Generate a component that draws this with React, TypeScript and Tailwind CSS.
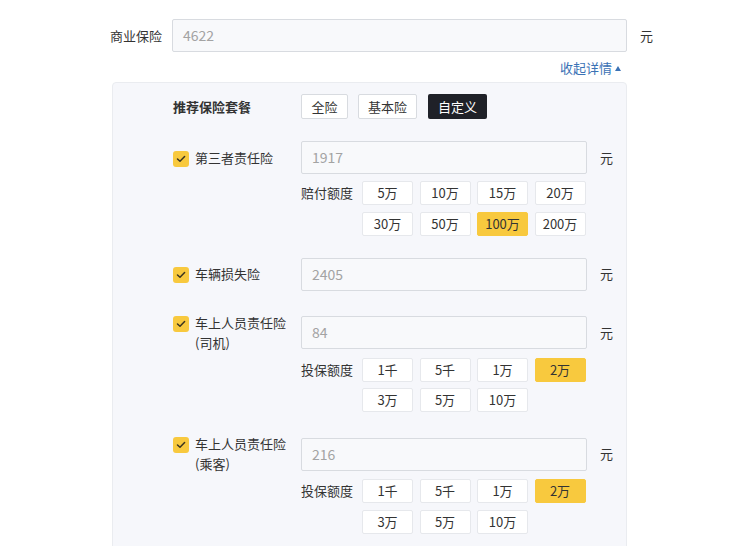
import React from 'react';

interface Coverage {
  label: string[];
  value: string;
  optionLabel?: string;
  options?: string[];
  selected?: string;
}

const coverages: Coverage[] = [
  {
    label: ['第三者责任险'],
    value: '1917',
    optionLabel: '赔付额度',
    options: ['5万', '10万', '15万', '20万', '30万', '50万', '100万', '200万'],
    selected: '100万',
  },
  { label: ['车辆损失险'], value: '2405' },
  {
    label: ['车上人员责任险', '(司机)'],
    value: '84',
    optionLabel: '投保额度',
    options: ['1千', '5千', '1万', '2万', '3万', '5万', '10万'],
    selected: '2万',
  },
  {
    label: ['车上人员责任险', '(乘客)'],
    value: '216',
    optionLabel: '投保额度',
    options: ['1千', '5千', '1万', '2万', '3万', '5万', '10万'],
    selected: '2万',
  },
];

function Checkbox() {
  return (
    <span className="mt-[3px] flex h-4 w-4 shrink-0 items-center justify-center rounded-[3px] bg-[#f8c93e]">
      <svg width="10" height="8" viewBox="0 0 10 8" fill="none">
        <path d="M1.5 4l2.5 2.3L8.6 1.6" stroke="#3a3420" strokeWidth="1.5" strokeLinecap="round" strokeLinejoin="round" />
      </svg>
    </span>
  );
}

function CoverageRow({ item }: { item: Coverage }) {
  return (
    <div>
      <div className="flex items-center">
        <div className="flex w-[128px] items-start gap-[6px]">
          <Checkbox />
          <div className="leading-5">
            {item.label.map((l) => (
              <div key={l}>{l}</div>
            ))}
          </div>
        </div>
        <div className="flex h-[33px] w-[286px] items-center rounded-[2px] border border-[#d8dbe0] bg-[#f8f9fb] px-[10px] text-[14px] text-[#a3a3a3]">
          {item.value}
        </div>
        <span className="ml-[13px]">元</span>
      </div>
      {item.options && (
        <div className={item.label.length > 1 ? 'mt-[5px] flex pl-[128px]' : 'mt-[7px] flex pl-[128px]'}>
          <span className="w-[61px] leading-6">{item.optionLabel}</span>
          <div className="grid grid-cols-[repeat(4,51px)] gap-x-[6.5px] gap-y-[6.5px]">
            {item.options.map((o) => (
              <div
                key={o}
                className={
                  o === item.selected
                    ? 'flex h-6 items-center justify-center rounded-[2px] border border-[#f8c93e] bg-[#f8c93e]'
                    : 'flex h-6 items-center justify-center rounded-[2px] border border-[#e6e8ec] bg-white'
                }
              >
                {o}
              </div>
            ))}
          </div>
        </div>
      )}
    </div>
  );
}

export default function App() {
  return (
    <div className="min-h-[546px] bg-white pl-[110px] pt-[19px] font-['Noto_Sans_CJK_SC',sans-serif] text-[13px] text-[#333]">
      {/* 商业保险 */}
      <div className="flex h-[33px] items-center">
        <span className="w-[62px]">商业保险</span>
        <div className="flex h-[33px] w-[455px] items-center rounded-[2px] border border-[#d8dbe0] bg-[#f8f9fb] px-[10px] text-[14px] text-[#a3a3a3]">
          4622
        </div>
        <span className="ml-[13px]">元</span>
      </div>

      <div className="mt-[6px] flex h-5 w-[517px] items-center justify-end gap-[3px] pr-[6px] text-[#3b72b5]">
        <span>收起详情</span>
        <svg width="6" height="5" viewBox="0 0 6 5">
          <polygon points="3,0 6,5 0,5" fill="#3b72b5" />
        </svg>
      </div>

      {/* 详情 */}
      <div className="ml-[2px] mt-[4px] h-[480px] w-[515px] rounded-[4px] border border-[#eaecf0] bg-[#f6f7fb] pl-[60px] pt-[11px]">
        <div className="flex h-[25px] items-center">
          <span className="w-[128px] font-bold">推荐保险套餐</span>
          <div className="flex h-[25px] w-[47px] items-center justify-center rounded-[2px] border border-[#d8dbe0] bg-white">全险</div>
          <div className="ml-[10px] flex h-[25px] w-[59px] items-center justify-center rounded-[2px] border border-[#d8dbe0] bg-white">基本险</div>
          <div className="ml-[11px] flex h-[25px] w-[59px] items-center justify-center rounded-[2px] bg-[#1f2128] text-white">自定义</div>
        </div>

        <div className="mt-[22px] flex flex-col gap-[22px]">
          {coverages.map((c) => (
            <CoverageRow key={c.label.join('') + c.value} item={c} />
          ))}
        </div>
      </div>
    </div>
  );
}
